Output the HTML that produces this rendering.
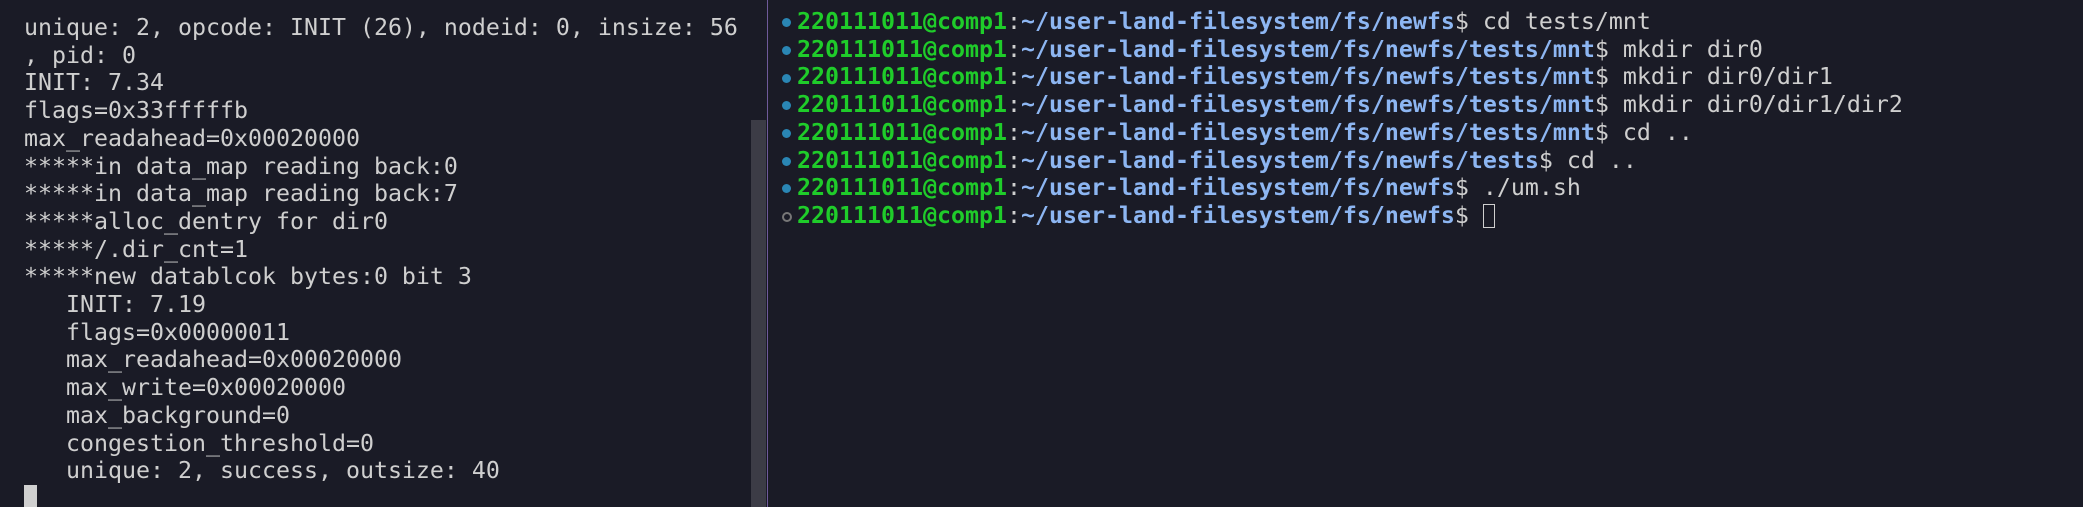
<!DOCTYPE html>
<html><head><meta charset="utf-8"><style>
html,body{margin:0;padding:0;}
body{width:2083px;height:507px;background:#1a1b26;overflow:hidden;position:relative;font-family:"DejaVu Sans Mono","Liberation Mono",monospace;font-size:23.25px;color:#cfcfcf;}
.pane{position:absolute;top:8px;white-space:pre;line-height:27.7px;}
#l{left:24px;top:14px;}
#r{left:797px;}
.g{color:#1fcc2a;font-weight:bold;}
.b{color:#8db6f2;font-weight:bold;}
.dot{position:absolute;left:-15px;width:9px;height:9px;border-radius:50%;background:#2a86b4;}
.ho{background:none;border:2px solid #777;width:6px;height:6px;}
#div{position:absolute;left:767px;top:0;width:1px;height:507px;background:#6f5a9a;}
#sb{position:absolute;left:751px;top:120px;width:15px;height:387px;background:#3c3c46;}
#cur{position:absolute;left:24px;top:485px;width:13px;height:22px;background:#d0d0d0;}
.box{display:inline-block;width:12px;height:24px;border:1.5px solid #cfcfcf;vertical-align:-5px;box-sizing:border-box;}
</style></head><body>
<div id="sb"></div><div id="div"></div>
<div class="pane" id="l">unique: 2, opcode: INIT (26), nodeid: 0, insize: 56
, pid: 0
INIT: 7.34
flags=0x33fffffb
max_readahead=0x00020000
*****in data_map reading back:0
*****in data_map reading back:7
*****alloc_dentry for dir0
*****/.dir_cnt=1
*****new datablcok bytes:0 bit 3
   INIT: 7.19
   flags=0x00000011
   max_readahead=0x00020000
   max_write=0x00020000
   max_background=0
   congestion_threshold=0
   unique: 2, success, outsize: 40</div>
<div id="cur"></div>
<div class="pane" id="r"><span class="dot" style="top:10px"></span><span class="g">220111011@comp1</span>:<span class="b">~/user-land-filesystem/fs/newfs</span>$ cd tests/mnt
<span class="dot" style="top:38px"></span><span class="g">220111011@comp1</span>:<span class="b">~/user-land-filesystem/fs/newfs/tests/mnt</span>$ mkdir dir0
<span class="dot" style="top:66px"></span><span class="g">220111011@comp1</span>:<span class="b">~/user-land-filesystem/fs/newfs/tests/mnt</span>$ mkdir dir0/dir1
<span class="dot" style="top:93px"></span><span class="g">220111011@comp1</span>:<span class="b">~/user-land-filesystem/fs/newfs/tests/mnt</span>$ mkdir dir0/dir1/dir2
<span class="dot" style="top:121px"></span><span class="g">220111011@comp1</span>:<span class="b">~/user-land-filesystem/fs/newfs/tests/mnt</span>$ cd ..
<span class="dot" style="top:149px"></span><span class="g">220111011@comp1</span>:<span class="b">~/user-land-filesystem/fs/newfs/tests</span>$ cd ..
<span class="dot" style="top:176px"></span><span class="g">220111011@comp1</span>:<span class="b">~/user-land-filesystem/fs/newfs</span>$ ./um.sh
<span class="dot ho" style="top:204px"></span><span class="g">220111011@comp1</span>:<span class="b">~/user-land-filesystem/fs/newfs</span>$ <span class="box"></span></div>
</body></html>
